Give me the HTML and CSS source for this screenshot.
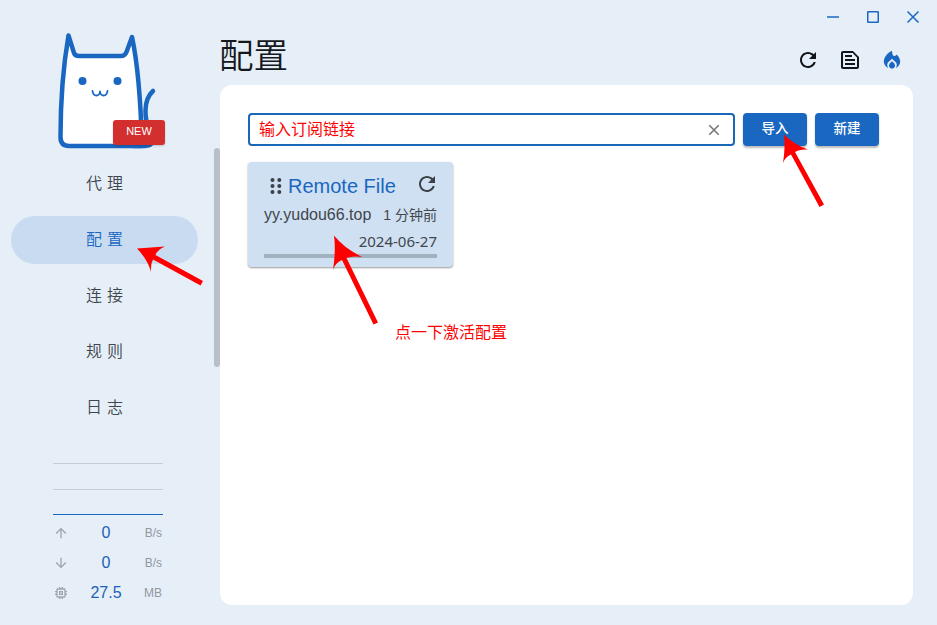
FILE: index.html
```html
<!DOCTYPE html>
<html lang="zh-CN">
<head>
<meta charset="utf-8">
<title>配置</title>
<link rel="stylesheet" href="styles.css">
</head>
<body>
<div class="app">
  <aside class="sidebar">
    <div class="brand">
      <svg class="cat" width="110" height="122" viewBox="0 0 110 122" fill="none" stroke="#1967c0" stroke-width="4.5" stroke-linecap="round" stroke-linejoin="round">
        <path d="M98 62C88 71 89 90 95 103C101 112 97 117 90 117H78"/>
        <path fill="#fff" d="M13.500 6.500Q5.500 53 5.500 108Q5.500 117 14 117H87Q85 45 77 8L71.500 23Q70 27 66 27H24Q20 27 19 24Z"/>
        <circle cx="27.500" cy="52" r="4" fill="#1967c0" stroke="none"/>
        <circle cx="62.500" cy="52" r="4" fill="#1967c0" stroke="none"/>
        <path stroke-width="1.800" d="M37.500 62Q38 66.500 41.500 66.500Q44.500 66.500 45 62.500Q45.500 66.500 48.500 66.500Q52 66.500 52.500 62"/>
      </svg>
      <span class="new">NEW</span>
    </div>
    <nav class="nav">
      <a>代理</a>
      <a class="active">配置</a>
      <a>连接</a>
      <a>规则</a>
      <a>日志</a>
    </nav>
    <div class="traffic">
      <div class="graph"><i></i><i></i><i></i></div>
      <div class="stat"><svg width="16" height="16" viewBox="0 0 24 24"><path d="m4 12 1.410 1.410L11 7.830V20h2V7.830l5.580 5.590L20 12l-8-8-8 8z"/></svg><b>0</b><span>B/s</span></div>
      <div class="stat"><svg width="16" height="16" viewBox="0 0 24 24"><path d="m20 12-1.410-1.410L13 16.170V4h-2v12.170l-5.580-5.590L4 12l8 8 8-8z"/></svg><b>0</b><span>B/s</span></div>
      <div class="stat"><svg width="16" height="16" viewBox="0 0 24 24"><path d="M15 9H9v6h6V9zm-2 4h-2v-2h2v2zm8-2V9h-2V7c0-1.100-.9-2-2-2h-2V3h-2v2h-2V3H9v2H7c-1.100 0-2 .9-2 2v2H3v2h2v2H3v2h2v2c0 1.100.9 2 2 2h2v2h2v-2h2v2h2v-2h2c1.100 0 2-.9 2-2v-2h2v-2h-2v-2h2zm-4 6H7V7h10v10z"/></svg><b>27.5</b><span>MB</span></div>
    </div>
  </aside>
  <div class="scrollbar"></div>
  <main class="main">
    <div class="window-controls">
      <svg width="14" height="14"><path d="M1 7H13"/></svg>
      <svg width="14" height="14"><rect x="1.750" y="1.750" width="10.500" height="10.500" rx=".5"/></svg>
      <svg width="14" height="14"><path d="M1.500 1.500l11 11M12.500 1.500l-11 11"/></svg>
    </div>
    <header class="header">
      <h1>配置</h1>
      <div class="tools">
        <svg width="24" height="24" viewBox="0 0 24 24"><path d="M17.650 6.350C16.200 4.900 14.210 4 12 4c-4.420 0-7.990 3.580-7.990 8s3.570 8 7.990 8c3.730 0 6.840-2.550 7.730-6h-2.080c-.82 2.330-3.040 4-5.650 4-3.310 0-6-2.690-6-6s2.690-6 6-6c1.660 0 3.140.69 4.220 1.780L13 11h7V4l-2.350 2.350z"/></svg>
        <svg width="24" height="24" viewBox="0 0 24 24"><path d="M7 15h10v2H7zm0-4h10v2H7zm0-4h7v2H7z"/><path d="M15 5v.59l4 4V19H5V5h10m0-2H5c-1.100 0-2 .9-2 2v14c0 1.100.9 2 2 2h14c1.100 0 2-.9 2-2V9l-6-6z"/></svg>
        <svg class="fire" width="24" height="24" viewBox="0 0 24 24"><path d="M12 2.800Q7 5 4.500 10Q2.500 15.500 6.500 19L8 20Q6 15.500 9 13.500L12 10.800L15 13.500Q18 15.500 16 20L17.500 19Q21.500 15.500 19.500 10.500Q18.500 8 16.500 6.500Q15.500 8.200 14 8Q12.200 7.500 12 2.800Z"/><path d="M12 13.300L9.700 15.500Q8.200 17.500 9.400 19.300Q12 22 14.600 19.300Q15.800 17.500 14.300 15.500Z"/></svg>
      </div>
    </header>
    <section class="panel">
      <div class="import-row">
        <div class="field"><span>输入订阅链接</span><svg width="12" height="12"><path d="M1.300 1.300l9.400 9.400M10.700 1.300l-9.400 9.400"/></svg></div>
        <button>导入</button>
        <button>新建</button>
      </div>
      <article class="profile">
        <div class="title">
          <svg class="grip" width="12" height="18"><circle cx="2.500" cy="3" r="2"/><circle cx="9.300" cy="3" r="2"/><circle cx="2.500" cy="9" r="2"/><circle cx="9.300" cy="9" r="2"/><circle cx="2.500" cy="15" r="2"/><circle cx="9.300" cy="15" r="2"/></svg>
          <h2>Remote File</h2>
          <svg width="24" height="24" viewBox="0 0 24 24"><path d="M17.650 6.350C16.200 4.900 14.210 4 12 4c-4.420 0-7.990 3.580-7.990 8s3.570 8 7.990 8c3.730 0 6.840-2.550 7.730-6h-2.080c-.82 2.330-3.040 4-5.650 4-3.310 0-6-2.690-6-6s2.690-6 6-6c1.660 0 3.140.69 4.220 1.780L13 11h7V4l-2.350 2.350z"/></svg>
        </div>
        <div class="source"><span>yy.yudou66.top</span><time>1 分钟前</time></div>
        <div class="expiry">2024-06-27</div>
        <div class="progress"></div>
      </article>
    </section>
  </main>
  <svg class="arrows" width="937" height="625">
    <path d="M137 248.500L165 246.500Q157 250 155.500 255L203 281L200.500 285.500L153 259.500Q150.500 264 151 272Q148 260 137 248.500Z"/>
    <path d="M334 235.500Q344 248 362 257Q352 255.500 346.500 258L378 322.500L373.500 324.500L342 260Q335 263 333 270Q336 250 334 235.500Z"/>
    <path d="M784 134.500Q793 144 808 149.500Q799 149 795 152L824 204.500L819.500 207L791 154.500Q785 157 783 163Q785.500 147 784 134.500Z"/>
  </svg>
  <div class="hint">点一下激活配置</div>
</div>
</body>
</html>
```

FILE: styles.css
```css
* { box-sizing: border-box; }

body {
  margin: 0;
  background: #e6eff8;
  color: #41464c;
  font-family: "Liberation Sans", "Noto Sans CJK SC", sans-serif;
}

.app {
  position: relative;
  display: flex;
  width: 937px;
  height: 625px;
  overflow: hidden;
}

.sidebar { width: 214px; flex: none; display: flex; flex-direction: column; }

.brand { position: relative; height: 160px; padding: 29px 0 0 55px; }
.cat { display: block; }
.new {
  position: absolute;
  left: 113px;
  top: 120px;
  width: 52px;
  height: 25px;
  border-radius: 3px;
  background: #d32f2f;
  box-shadow: 0 1px 2px #0003;
  color: #fff;
  font-size: 11px;
  line-height: 23px;
  text-align: center;
}

.nav { display: grid; gap: 8px; padding: 0 16px 0 11px; }
.nav a {
  height: 48px;
  padding-left: 5px;
  border-radius: 24px;
  font-size: 16px;
  font-weight: 350;
  line-height: 48px;
  letter-spacing: 5px;
  text-align: center;
}
.nav .active { background: #c9dbf1; color: #1967c0; }

.traffic { width: 110px; margin: 31px 0 0 53px; }
.graph { height: 52px; display: flex; flex-direction: column; justify-content: space-between; }
.graph i { height: 1px; background: #c5cdd8; }
.graph i:last-child { background: #1967c0; }
.stat {
  height: 30px;
  display: grid;
  grid-template-columns: 16px 1fr 24px;
  align-items: center;
  position: relative;
  top: 3px;
}
.stat svg { fill: #a0a5ab; width: 16px; height: 16px; }
.stat b { color: #1c5fb5; font-size: 16px; font-weight: 400; text-align: center; padding-left: 4px; }
.stat span { color: #9297a0; font-size: 12px; text-align: right; margin-right: 1px; }

.scrollbar { width: 6px; height: 219px; margin-top: 148px; border-radius: 3px; background: #b9bfca; flex: none; }

.main { flex: 1; padding-right: 24px; }
.window-controls { height: 34px; display: flex; justify-content: flex-end; align-items: center; gap: 26px; margin-right: -7px; }
.window-controls svg { fill: none; stroke: #1967c0; stroke-width: 1.5; }

.header { height: 51px; display: flex; justify-content: space-between; }
h1 { margin: 0 0 0 -1px; color: #15181c; font-size: 34.5px; font-weight: 350; line-height: 45px; }
.tools { display: flex; gap: 18px; margin: 14px 9px 0 0; }
.tools svg { width: 24px; height: 24px; fill: #111418; }
.tools .fire { fill: #1967c0; }

.panel { height: 520px; padding: 28px 34px 0 28px; border-radius: 12px; background: #fff; }
.import-row { display: flex; gap: 8px; height: 33px; }
.field {
  flex: 1;
  display: flex;
  justify-content: space-between;
  align-items: center;
  padding: 0 13px 0 9px;
  border: 2px solid #1967b8;
  border-radius: 4px;
  color: #f00;
  font-size: 16px;
  line-height: 28px;
}
.field svg { fill: none; stroke: #777; stroke-width: 1.6; }
button {
  width: 64px;
  height: 33px;
  padding: 0 0 5px;
  border: 0;
  border-radius: 4px;
  background: #1967c0;
  box-shadow: 0 2px 2px #0004;
  color: #fff;
  font: 500 13.5px "Noto Sans CJK SC", sans-serif;
}

.profile {
  width: 205px;
  height: 105px;
  margin-top: 16px;
  padding: 10px 16px 0;
  border-radius: 4px;
  background: #cfe0f2;
  box-shadow: 0 1px 2px #0006;
}
.title { display: flex; align-items: center; height: 27px; padding-left: 6px; }
.title svg { fill: #3c4147; flex: none; margin: 0 -2px 3px 0; }
.title .grip { margin: 0 6px 0 0; }
h2 { flex: 1; margin: 0; color: #1967c0; font-size: 20px; font-weight: 400; line-height: 27px; padding-top: 1px; white-space: nowrap; }
.source { display: flex; justify-content: space-between; align-items: center; height: 30px; font-size: 16px; white-space: nowrap; }
.source span { padding-top: 2px; }
.source time { font-size: 14px; }
.expiry { height: 24px; font: 15px/24px "Noto Sans", sans-serif; text-align: right; }
.progress { height: 4px; margin-top: 1px; background: #a2b1bf; }

.arrows { position: absolute; inset: 0; fill: #f00; pointer-events: none; }
.hint { position: absolute; left: 395px; top: 321px; color: #f00; font-size: 16px; line-height: 24px; white-space: nowrap; }
```
